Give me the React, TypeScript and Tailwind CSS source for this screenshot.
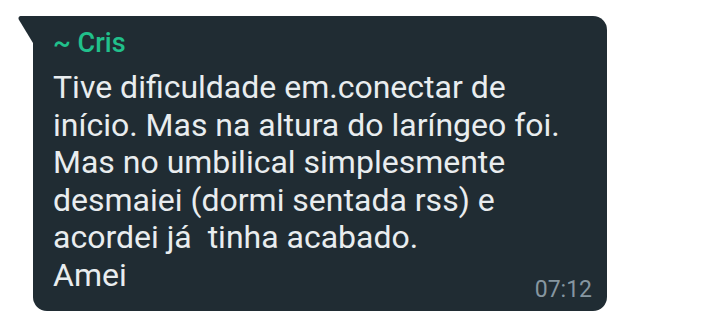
const LINES = [
  "Tive dificuldade em.conectar de",
  "início. Mas na altura do laríngeo foi.",
  "Mas no umbilical simplesmente",
  "desmaiei (dormi sentada rss) e",
  "acordei já  tinha acabado.",
  "Amei",
];

export default function App() {
  return (
    <div
      className="w-[720px] h-[324px] bg-white pt-[16px] pl-[18px]"
      style={{ fontFamily: "Roboto, 'Noto Sans', sans-serif" }}
    >
      <div className="flex">
        {/* Tail */}
        <svg width="15" height="28" viewBox="0 0 15 28" className="shrink-0">
          <path d="M2.5 0H15V27L0.9 3.8C-0.1 2.1 0.8 0 2.5 0Z" fill="#202c33" />
        </svg>

        {/* Bubble */}
        <div className="relative w-[574px] h-[295px] bg-[#202c33] rounded-tr-[14px] rounded-b-[14px] pl-[20px] pt-[12px]">
          <div className="text-[27px] leading-[30px] font-medium text-[#21c08b]">~ Cris</div>
          <div className="mt-[11px] text-[32px] leading-[37.6px] text-[#e9edef] whitespace-pre">
            {LINES.map((line, i) => (
              <div key={i}>{line}</div>
            ))}
          </div>
          <span className="absolute right-[15px] bottom-[8px] text-[23px] leading-[26px] text-[#8696a0]">
            07:12
          </span>
        </div>
      </div>
    </div>
  );
}
